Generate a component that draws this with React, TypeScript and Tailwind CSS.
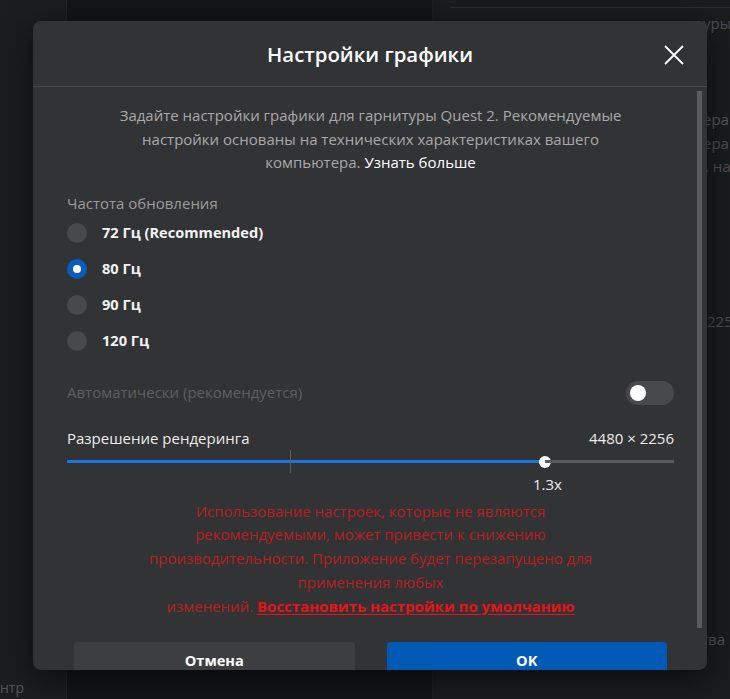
import React from 'react';

/**
 * Radio option row for the refresh-rate list
 */
function RadioRow({ label, checked }: { label: string; checked?: boolean }) {
  return (
    <div className="flex h-[36px] items-center gap-[15px]">
      {checked ? (
        <span className="flex h-[20px] w-[20px] items-center justify-center rounded-full bg-[#0a5cc2]">
          <span className="h-[8px] w-[8px] rounded-full bg-white" />
        </span>
      ) : (
        <span className="h-[20px] w-[20px] rounded-full bg-[#48494b]" />
      )}
      <span className="text-[14.6px] font-bold text-[#f2f2f2]">{label}</span>
    </div>
  );
}

function CloseIcon() {
  return (
    <svg width="20" height="20" viewBox="0 0 20 20" fill="none">
      <path d="M1 1L19 19M19 1L1 19" stroke="#ffffff" strokeWidth="1.8" />
    </svg>
  );
}

export default function App() {
  return (
    <div className="relative flex h-[699px] w-[730px] overflow-hidden bg-[#141517] font-['Open_Sans','Noto_Sans',sans-serif]">
      {/* Page behind the dialog */}
      <div className="flex w-[67px] shrink-0 flex-col justify-end border-r border-[#25262a] bg-[#1c1d1f] pb-[1px]">
        <span className="text-[14px] text-[#55565a]">нтр</span>
      </div>
      <div className="w-[365px] shrink-0 bg-[#141517]" />
      <div className="flex min-w-0 flex-1 flex-col overflow-hidden border-l border-[#1f2023] bg-[#1b1c1e] pl-[17px]">
        <div className="mt-[7px] h-[1px] bg-[#2c2d30]" />
        <div className="ml-[253px] flex flex-col items-start text-[15px] leading-[20px] text-[#4f5054] whitespace-nowrap">
          <span className="mt-[5px]">уры</span>
          <span className="mt-[76px] text-[#5a5b5e]">ера</span>
          <span className="mt-[4px]">ера</span>
          <span className="mt-[3px] pl-[2px]">. на</span>
          <span className="mt-[135px] pl-[4px]">2256</span>
          <span className="mt-[298px] -ml-[2px] text-[#55565a]">тва</span>
        </div>
      </div>

      {/* Dialog */}
      <div className="absolute left-[33px] top-[21px] flex h-[649px] w-[674px] flex-col overflow-hidden rounded-[8px] bg-[#323335] shadow-[0_8px_32px_rgba(0,0,0,0.6)]">
        <div className="relative flex h-[66px] shrink-0 items-center justify-center border-b border-[#48494b]">
          <h2 className="mt-[2px] text-[20.4px] font-semibold text-white">
            Настройки графики
          </h2>
          <button className="absolute right-[23px] top-[24px]">
            <CloseIcon />
          </button>
        </div>

        <div className="relative flex-1 overflow-hidden">
          {/* Scrollbar */}
          <div className="absolute right-[5px] top-[4px] h-[537px] w-[5px] bg-[#5b5c5e]" />

          <div className="flex flex-col pl-[34px] pr-[33px] pt-[17px]">
            <p className="text-center text-[15px] leading-[23.5px] text-[#a9a9a9]">
              Задайте настройки графики для гарнитуры Quest 2. Рекомендуемые
              <br />
              настройки основаны на технических характеристиках вашего
              <br />
              компьютера. <span className="text-white">Узнать больше</span>
            </p>

            <p className="mt-[18px] text-[15px] leading-[20px] text-[#9c9c9c]">
              Частота обновления
            </p>
            <div className="mt-[2px] flex flex-col">
              <RadioRow label="72 Гц (Recommended)" />
              <RadioRow label="80 Гц" checked />
              <RadioRow label="90 Гц" />
              <RadioRow label="120 Гц" />
            </div>

            <div className="mt-[22px] flex h-[24px] items-center justify-between">
              <span className="text-[15px] text-[#5e5f62]">Автоматически (рекомендуется)</span>
              <span className="flex h-[24px] w-[48px] items-center rounded-full bg-[#48494b] pl-[4px]">
                <span className="h-[16px] w-[16px] rounded-full bg-white" />
              </span>
            </div>

            <div className="mt-[24px] flex h-[20px] items-center justify-between text-[15px] text-[#ececec]">
              <span>Разрешение рендеринга</span>
              <span>4480 × 2256</span>
            </div>

            {/* Slider */}
            <div className="mt-[1px] flex h-[24px] items-center">
              <div className="h-[2.5px] w-[223px] bg-[#1b74e4]" />
              <div className="h-[23px] w-[1px] bg-[#5e5f62]" />
              <div className="h-[2.5px] w-[254px] bg-[#1b74e4]" />
              <div className="-mx-[6px] h-[12px] w-[12px] rounded-full bg-white" />
              <div className="h-[2.5px] flex-1 bg-[#5b5c5e]" />
            </div>
            <div className="mt-[1px] flex h-[20px] items-center">
              <span className="ml-[466px] text-[15px] text-[#ececec]">1.3x</span>
            </div>

            <p className="mt-[5px] text-center text-[15px] leading-[23.75px] text-[#b8201f]">
              Использование настроек, которые не являются
              <br />
              рекомендуемыми, может привести к снижению
              <br />
              производительности. Приложение будет перезапущено для
              <br />
              применения любых
              <br />
              изменений.{' '}
              <a className="font-bold text-[#e3151b] underline underline-offset-2">
                Восстановить настройки по умолчанию
              </a>
            </p>

            <div className="mt-[24px] flex gap-[32px] px-[7px]">
              <button className="h-[38px] flex-1 rounded-[4px] bg-[#3d3e40] text-[14.6px] font-bold text-white">
                Отмена
              </button>
              <button className="h-[38px] flex-1 rounded-[4px] bg-[#005ab5] text-[14.6px] font-bold text-white">
                OK
              </button>
            </div>
          </div>
        </div>
      </div>
    </div>
  );
}
